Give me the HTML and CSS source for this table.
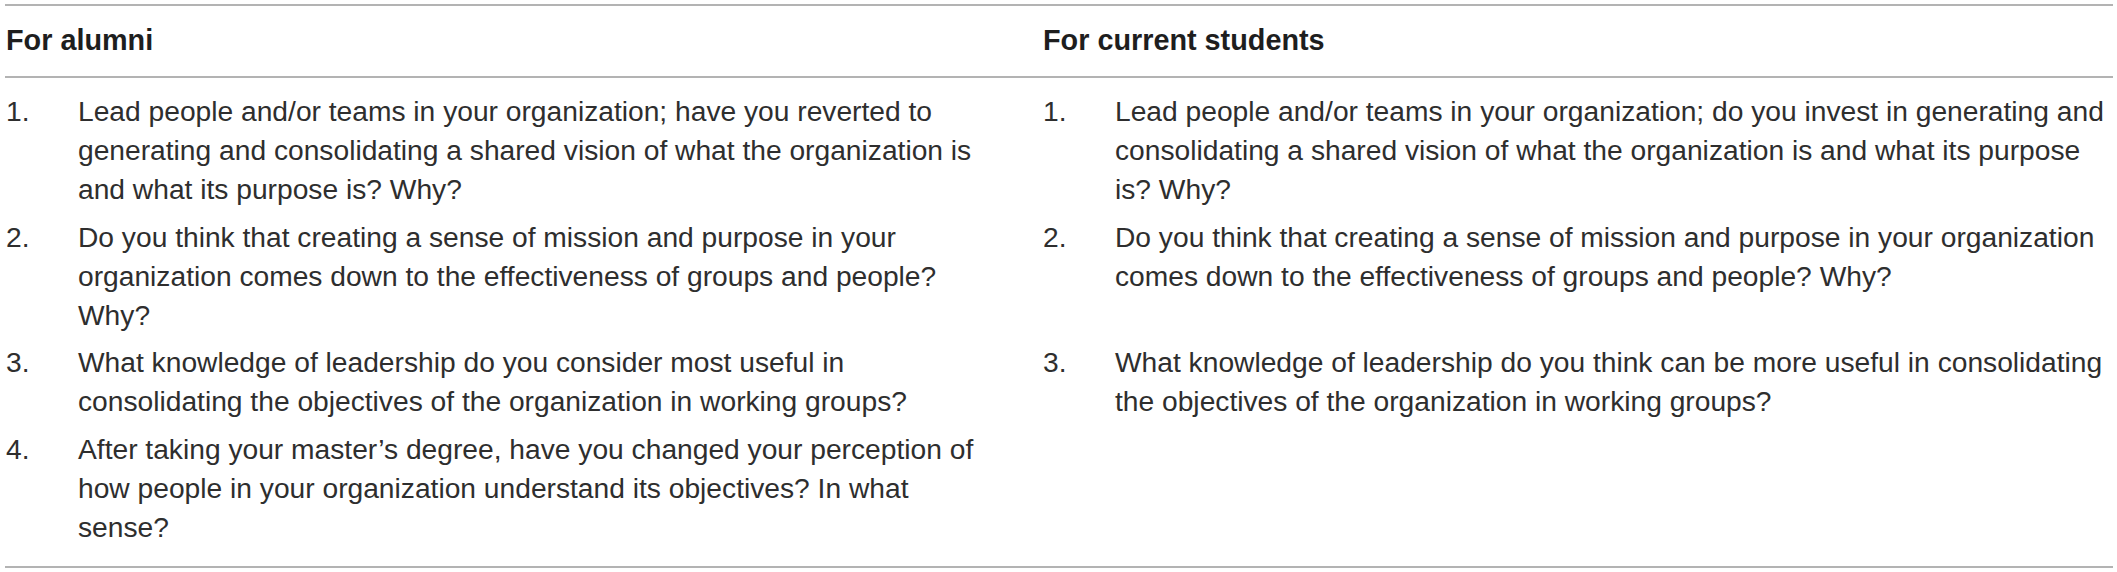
FILE: index.html
```html
<!DOCTYPE html>
<html lang="en">
<head>
<meta charset="utf-8">
<title>Interview questions</title>
<link rel="stylesheet" href="styles.css">
</head>
<body>
<table class="qtable">
  <colgroup>
    <col class="col-left">
    <col class="col-right">
  </colgroup>
  <thead>
    <tr>
      <th class="cell-left">For alumni</th>
      <th class="cell-right">For current students</th>
    </tr>
  </thead>
  <tbody>
    <tr class="row-first">
      <td class="cell-left"><div class="item"><span class="num">1.</span><span class="txt">Lead people and/or teams in your organization; have you reverted to generating and consolidating a shared vision of what the organization is and what its purpose is? Why?</span></div></td>
      <td class="cell-right"><div class="item"><span class="num">1.</span><span class="txt">Lead people and/or teams in your organization; do you invest in generating and consolidating a shared vision of what the organization is and what its purpose is? Why?</span></div></td>
    </tr>
    <tr>
      <td class="cell-left"><div class="item"><span class="num">2.</span><span class="txt">Do you think that creating a sense of mission and purpose in your organization comes down to the effectiveness of groups and people? Why?</span></div></td>
      <td class="cell-right"><div class="item"><span class="num">2.</span><span class="txt">Do you think that creating a sense of mission and purpose in your organization comes down to the effectiveness of groups and people? Why?</span></div></td>
    </tr>
    <tr>
      <td class="cell-left"><div class="item"><span class="num">3.</span><span class="txt">What knowledge of leadership do you consider most useful in consolidating the objectives of the organization in working groups?</span></div></td>
      <td class="cell-right"><div class="item"><span class="num">3.</span><span class="txt">What knowledge of leadership do you think can be more useful in consolidating the objectives of the organization in working groups?</span></div></td>
    </tr>
    <tr class="row-last">
      <td class="cell-left"><div class="item"><span class="num">4.</span><span class="txt">After taking your master’s degree, have you changed your perception of how people in your organization understand its objectives? In what sense?</span></div></td>
      <td class="cell-right"></td>
    </tr>
  </tbody>
</table>
</body>
</html>
```

FILE: styles.css
```css
html, body {
  margin: 0;
  padding: 0;
  background: #ffffff;
}

body {
  font-family: "Liberation Sans", Arial, Helvetica, sans-serif;
  color: #2e2e2e;
}

.qtable {
  margin: 4px 0 0 5px;
  width: 2108px;
  table-layout: fixed;
  border-collapse: collapse;
  border-top: 2px solid #b3b3b3;
  border-bottom: 2px solid #b3b3b3;
}

.col-left { width: 1036px; }
.col-right { width: 1072px; }

.qtable th {
  text-align: left;
  font-weight: bold;
  font-size: 28.8px;
  line-height: 39px;
  color: #1e1e1e;
  padding-top: 15px;
  padding-bottom: 16px;
  border-bottom: 2px solid #b3b3b3;
}

.qtable td {
  vertical-align: top;
  font-size: 28.2px;
  line-height: 39.2px;
  padding-top: 4px;
  padding-bottom: 4px;
}

.cell-left {
  padding-left: 1px;
  padding-right: 46px;
}

.cell-right {
  padding-left: 2px;
  padding-right: 0;
}

.qtable .row-first td { padding-top: 14px; }
.qtable .row-last td { padding-bottom: 19px; }

.item {
  display: flex;
}

.num {
  flex: 0 0 72px;
}

.txt {
  flex: 1 1 auto;
  min-width: 0;
}
```
